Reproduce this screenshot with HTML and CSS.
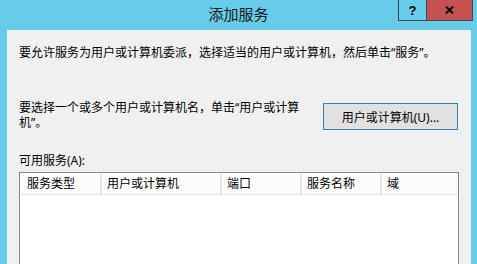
FILE: index.html
```html
<!DOCTYPE html>
<html lang="zh-CN">
<head>
    <meta charset="UTF-8">
    <title>添加服务</title>
    <link rel="stylesheet" href="styles.css">
</head>
<body>
    <div class="window">
        <div class="titlebar">
            <div class="title">添加服务</div>
            <div class="caption-buttons">
                <div class="btn-help">?</div>
                <div class="btn-close">
                    <svg width="9" height="8" viewBox="0 0 9 8">
                        <path d="M1 0.5 L8 7.5 M8 0.5 L1 7.5" stroke="#000" stroke-width="2" fill="none"/>
                    </svg>
                </div>
            </div>
        </div>

        <div class="client">
            <p class="intro">要允许服务为用户或计算机委派，选择适当的用户或计算机，然后单击“服务”。</p>

            <div class="pick-row">
                <p class="pick-text">要选择一个或多个用户或计算机名，单击“用户或计算机”。</p>
                <button class="pick-button" type="button">用户或计算机(U)...</button>
            </div>

            <div class="label">可用服务(A):</div>

            <div class="list">
                <div class="list-header">
                    <div class="col first">服务类型</div>
                    <div class="col">用户或计算机</div>
                    <div class="col">端口</div>
                    <div class="col">服务名称</div>
                    <div class="col last">域</div>
                </div>
            </div>
        </div>
    </div>
</body>
</html>
```

FILE: styles.css
```css
body {
    margin: 0;
    background: #67cbea;
    font-family: "Segoe UI", "Noto Sans", "Noto Sans CJK SC", sans-serif;
    font-size: 12px;
    color: #000;
    height: 264px;
    overflow: hidden;
}
.window {
    display: flex;
    flex-direction: column;
    height: 264px;
}
.titlebar {
    height: 30px;
    display: grid;
    grid-template-columns: 1fr auto 1fr;
    align-items: start;
}
.title {
    grid-column: 2;
    font-size: 15px;
    line-height: 29px;
    color: #1a1a1a;
}
.caption-buttons {
    grid-column: 3;
    justify-self: end;
    margin-right: 4px;
    display: flex;
    height: 20px;
    border: 1px solid #3a4a52;
    border-top: none;
}
.btn-help {
    width: 27px;
    border-right: 1px solid #3a4a52;
    display: flex;
    align-items: center;
    justify-content: center;
    font-family: "Liberation Sans", Arial, sans-serif;
    font-weight: bold;
    font-size: 13px;
}
.btn-close {
    width: 45px;
    background: #c75050;
    display: flex;
    align-items: center;
    justify-content: center;
}
.client {
    flex: 1;
    margin: 0 6px 0 7px;
    background: #f0f0f0;
    padding: 15px 13px 0 12px;
    display: flex;
    flex-direction: column;
    min-height: 0;
}
.intro {
    margin: 0;
    line-height: 15px;
    white-space: nowrap;
}
.pick-row {
    display: flex;
    justify-content: space-between;
    align-items: flex-start;
    margin-top: 40px;
}
.pick-text {
    width: 290px;
    margin: 0;
    line-height: 15px;
}
.pick-button {
    margin-top: 3px;
    width: 135px;
    height: 27px;
    padding: 0;
    border: 1px solid #3c7fb1;
    background: #e1e1e1;
    font: inherit;
    color: #000;
}
.label {
    margin-top: 23px;
    line-height: 15px;
}
.list {
    margin-top: 4px;
    width: 437px;
    flex: 1;
    border: 1px solid #828790;
    border-bottom: none;
    background: #fff;
    padding: 1px 0 0 1px;
}
.list-header {
    display: grid;
    grid-template-columns: 81px 120px 80px 80px 1fr;
    height: 20px;
    background: #fcfcfc;
    border-bottom: 1px solid #e3e3e3;
}
.col {
    line-height: 20px;
    padding-left: 5px;
    border-right: 2px solid #e6e6e6;
    white-space: nowrap;
}
.col.first {
    padding-left: 6px;
}
.col.last {
    border-right: none;
}
```
